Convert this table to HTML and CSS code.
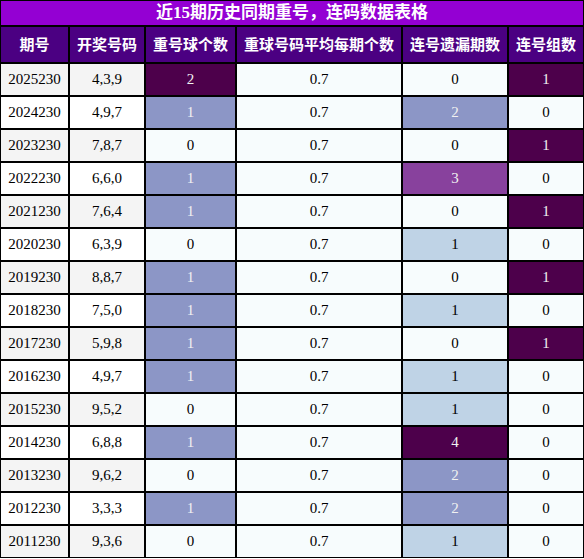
FILE: index.html
```html
<!DOCTYPE html>
<html lang="zh">
<head>
<meta charset="utf-8">
<title>近15期历史同期重号，连码数据表格</title>
<link rel="stylesheet" href="styles.css">
</head>
<body>
<table class="data">
  <colgroup>
    <col class="w1"><col class="w2"><col class="w3"><col class="w4"><col class="w5"><col class="w6">
  </colgroup>
  <tr class="title-row"><th colspan="6" class="title">近15期历史同期重号，连码数据表格</th></tr>
  <tr class="head-row">
    <th>期号</th><th>开奖号码</th><th>重号球个数</th><th>重球号码平均每期个数</th><th>连号遗漏期数</th><th>连号组数</th>
  </tr>
  <tr class="odd"><td class="plain">2025230</td><td class="plain">4,3,9</td><td class="c4">2</td><td class="c0">0.7</td><td class="c0">0</td><td class="c4">1</td></tr>
  <tr class="even"><td class="plain">2024230</td><td class="plain">4,9,7</td><td class="c2">1</td><td class="c0">0.7</td><td class="c2">2</td><td class="c0">0</td></tr>
  <tr class="odd"><td class="plain">2023230</td><td class="plain">7,8,7</td><td class="c0">0</td><td class="c0">0.7</td><td class="c0">0</td><td class="c4">1</td></tr>
  <tr class="even"><td class="plain">2022230</td><td class="plain">6,6,0</td><td class="c2">1</td><td class="c0">0.7</td><td class="c3">3</td><td class="c0">0</td></tr>
  <tr class="odd"><td class="plain">2021230</td><td class="plain">7,6,4</td><td class="c2">1</td><td class="c0">0.7</td><td class="c0">0</td><td class="c4">1</td></tr>
  <tr class="even"><td class="plain">2020230</td><td class="plain">6,3,9</td><td class="c0">0</td><td class="c0">0.7</td><td class="c1">1</td><td class="c0">0</td></tr>
  <tr class="odd"><td class="plain">2019230</td><td class="plain">8,8,7</td><td class="c2">1</td><td class="c0">0.7</td><td class="c0">0</td><td class="c4">1</td></tr>
  <tr class="even"><td class="plain">2018230</td><td class="plain">7,5,0</td><td class="c2">1</td><td class="c0">0.7</td><td class="c1">1</td><td class="c0">0</td></tr>
  <tr class="odd"><td class="plain">2017230</td><td class="plain">5,9,8</td><td class="c2">1</td><td class="c0">0.7</td><td class="c0">0</td><td class="c4">1</td></tr>
  <tr class="even"><td class="plain">2016230</td><td class="plain">4,9,7</td><td class="c2">1</td><td class="c0">0.7</td><td class="c1">1</td><td class="c0">0</td></tr>
  <tr class="odd"><td class="plain">2015230</td><td class="plain">9,5,2</td><td class="c0">0</td><td class="c0">0.7</td><td class="c1">1</td><td class="c0">0</td></tr>
  <tr class="even"><td class="plain">2014230</td><td class="plain">6,8,8</td><td class="c2">1</td><td class="c0">0.7</td><td class="c4">4</td><td class="c0">0</td></tr>
  <tr class="odd"><td class="plain">2013230</td><td class="plain">9,6,2</td><td class="c0">0</td><td class="c0">0.7</td><td class="c2">2</td><td class="c0">0</td></tr>
  <tr class="even"><td class="plain">2012230</td><td class="plain">3,3,3</td><td class="c2">1</td><td class="c0">0.7</td><td class="c2">2</td><td class="c0">0</td></tr>
  <tr class="odd"><td class="plain">2011230</td><td class="plain">9,3,6</td><td class="c0">0</td><td class="c0">0.7</td><td class="c1">1</td><td class="c0">0</td></tr>
</table>
</body>
</html>
```
FILE: styles.css
```css
html, body {
  margin: 0;
  padding: 0;
  background: #ffffff;
}

.data {
  width: 584px;
  table-layout: fixed;
  border-collapse: separate;
  border-spacing: 0;
  font-family: "Liberation Serif", "Noto Sans CJK SC", serif;
  font-size: 15px;
  color: #000000;
}

.w1 { width: 69px; }
.w2 { width: 76px; }
.w3 { width: 91px; }
.w4 { width: 166px; }
.w5 { width: 106px; }
.w6 { width: 76px; }

.data th,
.data td {
  border: 1px solid #000000;
  padding: 0;
  text-align: center;
  vertical-align: middle;
  box-sizing: border-box;
  white-space: nowrap;
  overflow: hidden;
}

.title-row { height: 26px; }
.head-row { height: 37px; }
.odd, .even { height: 33px; }

.title {
  background: #9400d3;
  color: #ffffff;
  font-size: 17px;
  font-weight: bold;
  line-height: 22px;
}

.head-row th {
  background: #4b0082;
  color: #ffffff;
  font-weight: bold;
  line-height: 20px;
}

.odd .plain { background: #f4f4f4; }
.even .plain { background: #ffffff; }

.c0 { background: #f7fcfd; color: #000000; }
.c1 { background: #bfd3e6; color: #000000; }
.c2 { background: #8c96c6; color: #f1f1f1; }
.c3 { background: #88419d; color: #f1f1f1; }
.c4 { background: #4d004b; color: #f1f1f1; }
```
